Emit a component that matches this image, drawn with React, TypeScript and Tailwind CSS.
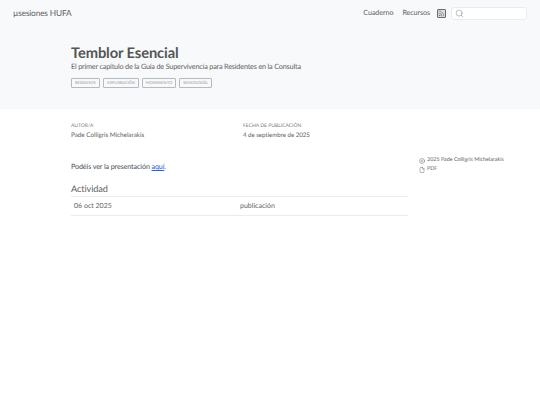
import { Copyright, File, Rss, Search } from 'lucide-react';

const categories = ['RESIDENTE', 'EXPLORACIÓN', 'MOVIMIENTO', 'SEMIOLOGÍA'];

export default function App() {
  return (
    <div className="min-h-[405px] bg-white text-[#343a40] font-['Lato','Noto_Sans',sans-serif] [text-rendering:geometricPrecision]">
      <header className="bg-[#f8f9fa] h-[109px]">
        <nav className="flex items-center h-[26px] pl-[13px] pr-[13px]">
          <span className="text-[8.4px] tracking-[-0.2px] text-[#5f6265]">µsesiones HUFA</span>
          <div className="ml-auto flex items-center text-[7.2px] tracking-[-0.1px] text-[#5f6265]">
            <span>Cuaderno</span>
            <span className="ml-[9px]">Recursos</span>
            <span className="ml-[7px] w-[9px] h-[9px] flex items-center justify-center bg-[#dcddde] border border-[#6a6d70] rounded-[1px]">
              <Rss size={7} strokeWidth={2} />
            </span>
            <div className="ml-[5px] w-[76px] h-[13px] bg-white border border-[#e9ecef] rounded-[3px] flex items-center pl-[3px]">
              <Search size={9} strokeWidth={1.2} className="text-[#6c757d]" />
            </div>
          </div>
        </nav>
        <div className="pl-[71px] pt-[18px]">
          <h1 className="text-[14.7px] leading-[18px] font-bold tracking-[-0.1px] text-[#545555]">Temblor Esencial</h1>
          <p className="text-[7.3px] leading-[10px] tracking-[-0.2px] text-[#5f6265]">El primer capítulo de la Guía de Supervivencia para Residentes en la Consulta</p>
          <div className="flex gap-[3px] mt-[6px]">
            {categories.map((c) => (
              <span key={c} className="h-[10px] px-[3px] flex items-center border border-[#b4bac0] rounded-[1px] text-[4px] text-[#8f969c]">{c}</span>
            ))}
          </div>
        </div>
      </header>
      <main className="flex pl-[71px] pt-[13px]">
        <div className="w-[337px]">
          <div className="flex text-[#5f6265]">
            <div className="w-[172px]">
              <div className="text-[5px] leading-[8px] text-[#7b8188]">AUTOR/A</div>
              <div className="text-[6.4px] tracking-[-0.05px] leading-[10px] mt-[1px]">Pade Colligris Michelarakis</div>
            </div>
            <div>
              <div className="text-[5px] leading-[8px] text-[#7b8188]">FECHA DE PUBLICACIÓN</div>
              <div className="text-[6.2px] tracking-[-0.05px] leading-[10px] mt-[1px]">4 de septiembre de 2025</div>
            </div>
          </div>
          <p className="text-[7.2px] leading-[11px] tracking-[-0.12px] mt-[20px] text-[#4a5056]">
            Podéis ver la presentación <a className="text-[#2761e3] underline">aquí</a>.
          </p>
          <h2 className="text-[9.2px] tracking-[-0.1px] leading-[13px] mt-[10px] text-[#5f6265]">Actividad</h2>
          <div className="mt-[1px] border-t border-b border-[#e9ecef] flex h-[20px] items-center text-[7px] leading-[10px] text-[#5f6265]">
            <span className="pl-[3px] w-[169px]">06 oct 2025</span>
            <span>publicación</span>
          </div>
        </div>
        <aside className="ml-[11px] pt-[34px] text-[5.4px] text-[#5f6265]">
          <div className="flex items-center gap-[2px] h-[9px]">
            <Copyright size={6} strokeWidth={1.6} className="text-[#4a5056]" />
            <span>2025 Pade Colligris Michelarakis</span>
          </div>
          <div className="flex items-center gap-[2px] h-[9px]">
            <File size={6} strokeWidth={1.6} className="text-[#4a5056]" />
            <span>PDF</span>
          </div>
        </aside>
      </main>
    </div>
  );
}
